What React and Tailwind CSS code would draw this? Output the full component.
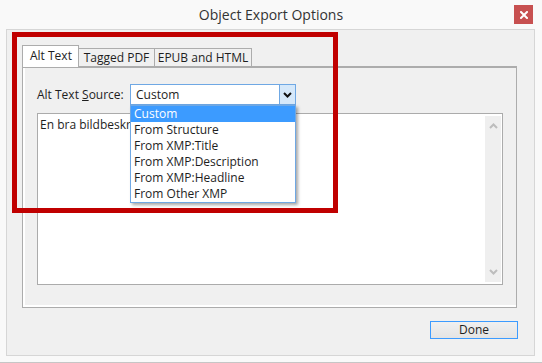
export default function App() {
  const items = [
    "Custom",
    "From Structure",
    "From XMP:Title",
    "From XMP:Description",
    "From XMP:Headline",
    "From Other XMP",
  ];
  return (
    <div className="relative w-[542px] h-[363px] overflow-hidden bg-[#f9f9f9] border-b border-[#c6c6c6] font-['Open_Sans','Noto_Sans',sans-serif] text-[12px] text-[#1e1e1e]">
      {/* Title bar */}
      <div className="h-[29px] flex items-center justify-center text-[14px] text-[#333333] pb-[1px]">
        Object Export Options
      </div>
      <div className="absolute left-[514px] top-[5px] w-[19px] h-[19px] bg-[#c75050] flex items-center justify-center">
        <svg width="8" height="8" viewBox="0 0 8 8">
          <path d="M1 1 L7 7 M7 1 L1 7" stroke="#ffffff" strokeWidth="2" strokeLinecap="square" />
        </svg>
      </div>

      {/* Dialog body */}
      <div className="ml-[6px] w-[529px] h-[327px] border border-[#d6d6d6] bg-[#f0f0f0] pt-[15px] pl-[15px] flex flex-col">
        {/* Tabs */}
        <div className="flex items-end h-[21px]">
          <div className="relative z-10 w-[57px] h-[22px] -mb-[1px] bg-white border border-b-0 border-[#acacac] pl-[7px] pt-[2px] leading-[16px]">
            Alt Text
          </div>
          <div className="w-[76px] h-[18px] bg-[#f0f0f0] border border-l-0 border-b-0 border-[#acacac] flex items-center justify-center leading-[16px]">
            Tagged PDF
          </div>
          <div className="w-[97px] h-[18px] bg-[#f0f0f0] border border-l-0 border-b-0 border-[#acacac] flex items-center justify-center leading-[16px]">
            EPUB and HTML
          </div>
        </div>

        {/* Panel */}
        <div className="w-[495px] h-[242px] border border-t-2 border-[#acacac] bg-[#f0f0f0]">
          <div className="w-full h-full border-l-2 border-b-2 border-white pl-[12px] pt-[16px]">
            <div className="flex items-center h-[21px]">
              <div className="w-[93px] leading-[16px]">
                Alt Text <span className="underline">S</span>ource:
              </div>
              <div className="w-[166px] h-[21px] border border-[#6fa8e4] bg-white flex">
                <div className="flex-1 pl-[5px] flex items-center leading-[16px]">Custom</div>
                <div className="w-[16px] h-full border-l border-[#6fa8e4] bg-[#d5e8fa] flex items-center justify-center">
                  <svg width="9" height="6" viewBox="0 0 9 6">
                    <path d="M1 1 L4.5 4.5 L8 1" stroke="#111" strokeWidth="2" fill="none" />
                  </svg>
                </div>
              </div>
            </div>
            {/* Textarea */}
            <div className="mt-[8px] w-[466px] h-[172px] border border-[#ababab] bg-white flex">
              <div className="flex-1 pl-[2px] pt-[3px] leading-[16px]">
                <div className="w-[90px] overflow-hidden whitespace-nowrap">En bra bildbeskrivning</div>
              </div>
              <div className="w-[16px] my-[2px] mr-[1px] bg-[#efefef] flex flex-col items-center justify-between py-[7px]">
                <svg width="9" height="6" viewBox="0 0 9 6">
                  <path d="M1 5 L4.5 1.5 L8 5" stroke="#bdbdbd" strokeWidth="2" fill="none" />
                </svg>
                <svg width="9" height="6" viewBox="0 0 9 6">
                  <path d="M1 1 L4.5 4.5 L8 1" stroke="#bdbdbd" strokeWidth="2" fill="none" />
                </svg>
              </div>
            </div>
          </div>
        </div>

        {/* Done button */}
        <div className="mt-[13px] ml-[408px] w-[88px] h-[18px] border border-[#3c9bff] bg-gradient-to-b from-[#f0f0f0] to-[#e4e4e4] flex items-center justify-center leading-[16px]">
          Done
        </div>
      </div>

      {/* Dropdown list overlay */}
      <div className="absolute left-[130px] top-[105px] w-[166px] h-[98px] border border-[#6fa8e4] bg-white shadow-[2px_2px_3px_rgba(0,0,0,0.35)] flex flex-col">
        {items.map((t, i) => (
          <div
            key={t}
            className={
              i === 0
                ? "h-[16px] pl-[3px] leading-[16px] bg-[#3c9bff] text-white"
                : "h-[16px] pl-[3px] leading-[16px]"
            }
          >
            {t}
          </div>
        ))}
      </div>

      {/* Red annotation box */}
      <div className="absolute left-[12px] top-[32px] w-[326px] h-[181px] border-[5px] border-[#c00000]"></div>
    </div>
  );
}
